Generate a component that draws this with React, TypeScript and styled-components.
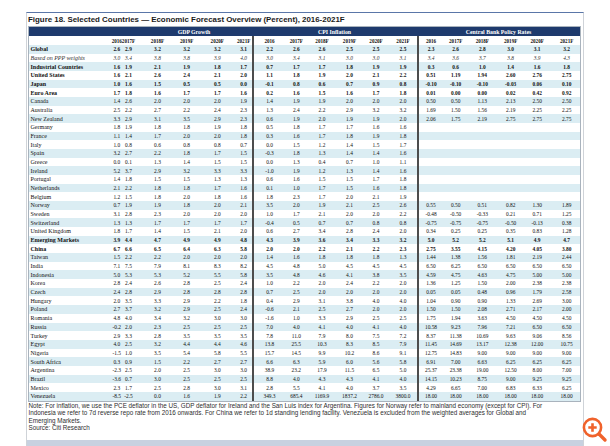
import React from "react";
import styled, { createGlobalStyle } from "styled-components";

type Kind = "bold" | "italic" | undefined;

interface Row {
  name: string;
  kind?: Kind;
  gdp: string;
  cpi: string;
  cbr?: string;
}

const rows: Row[] = [
  { name: "Global", kind: "bold", gdp: "2.6 2.9 3.2 3.2 3.2 3.1", cpi: "2.2 2.6 2.6 2.5 2.5 2.5", cbr: "2.3 2.6 2.8 3.0 3.1 3.2" },
  { name: "Based on PPP weights", kind: "italic", gdp: "3.0 3.4 3.8 3.8 3.9 4.0", cpi: "3.0 3.4 3.1 3.0 3.0 3.1", cbr: "3.4 3.6 3.7 3.8 3.9 4.3" },
  { name: "Industrial Countries", kind: "bold", gdp: "1.6 1.9 2.1 1.9 1.8 1.7", cpi: "0.7 1.7 1.7 1.8 1.9 1.9", cbr: "0.3 0.6 1.0 1.4 1.6 1.8" },
  { name: "United States", kind: "bold", gdp: "1.6 2.1 2.6 2.4 2.1 2.0", cpi: "1.1 1.8 1.9 2.0 2.1 2.2", cbr: "0.51 1.19 1.94 2.60 2.76 2.75" },
  { name: "Japan", kind: "bold", gdp: "1.0 1.6 1.5 0.5 0.5 0.0", cpi: "-0.1 0.8 0.6 0.7 0.9 0.8", cbr: "-0.10 -0.10 -0.10 -0.03 0.06 0.10" },
  { name: "Euro Area", kind: "bold", gdp: "1.7 1.8 1.6 1.7 1.7 1.6", cpi: "0.2 1.6 1.5 1.6 1.7 1.8", cbr: "0.01 0.00 0.00 0.02 0.42 0.92" },
  { name: "Canada", gdp: "1.4 2.6 2.0 2.0 2.0 1.9", cpi: "1.4 1.9 1.9 2.0 2.0 2.0", cbr: "0.50 0.50 1.13 2.13 2.50 2.50" },
  { name: "Australia", gdp: "2.5 2.2 2.7 2.2 2.4 2.3", cpi: "1.3 2.4 2.2 2.9 3.2 3.2", cbr: "1.69 1.50 1.56 2.19 2.25 2.25" },
  { name: "New Zealand", gdp: "3.3 2.9 3.1 3.5 2.9 2.3", cpi: "0.6 1.9 2.0 1.9 1.9 2.0", cbr: "2.06 1.75 2.19 2.75 2.75 2.75" },
  { name: "Germany", gdp: "1.8 1.9 1.8 1.8 1.9 1.8", cpi: "0.5 1.8 1.7 1.7 1.6 1.6" },
  { name: "France", gdp: "1.1 1.4 1.7 2.0 2.0 1.8", cpi: "0.3 1.6 1.7 1.8 1.9 1.8" },
  { name: "Italy", gdp: "1.0 0.8 0.6 0.8 0.8 0.7", cpi: "0.0 1.5 1.2 1.4 1.5 1.7" },
  { name: "Spain", gdp: "3.2 2.7 2.2 1.8 1.7 1.5", cpi: "-0.3 1.8 1.3 1.4 1.4 1.6" },
  { name: "Greece", gdp: "0.0 0.1 1.3 1.4 1.5 1.5", cpi: "0.0 1.3 0.4 0.7 1.0 1.1" },
  { name: "Ireland", gdp: "5.2 3.7 2.9 3.2 3.3 3.3", cpi: "-1.0 1.9 1.2 1.3 1.4 1.6" },
  { name: "Portugal", gdp: "1.4 1.8 1.5 1.5 1.3 1.3", cpi: "0.6 1.6 1.5 1.5 1.7 1.8" },
  { name: "Netherlands", gdp: "2.1 2.2 1.8 1.8 1.7 1.6", cpi: "0.1 1.0 1.7 1.5 1.6 1.8" },
  { name: "Belgium", gdp: "1.2 1.5 1.8 2.0 1.8 1.6", cpi: "1.8 2.3 1.7 2.0 2.1 1.9" },
  { name: "Norway", gdp: "0.7 1.9 1.9 1.8 2.0 2.1", cpi: "3.5 2.0 1.9 2.1 2.5 2.6", cbr: "0.55 0.50 0.51 0.82 1.30 1.89" },
  { name: "Sweden", gdp: "3.1 2.8 2.3 2.0 2.0 2.0", cpi: "1.0 1.7 2.1 2.0 2.0 2.2", cbr: "-0.48 -0.50 -0.33 0.21 0.71 1.25" },
  { name: "Switzerland", gdp: "1.3 1.3 1.7 1.7 1.7 1.7", cpi: "-0.4 0.5 0.7 0.7 0.8 0.8", cbr: "-0.75 -0.75 -0.75 -0.50 -0.13 0.38" },
  { name: "United Kingdom", gdp: "1.8 1.7 1.4 1.5 2.1 2.0", cpi: "0.6 2.7 3.4 2.8 2.4 2.0", cbr: "0.34 0.25 0.25 0.35 0.83 1.28" },
  { name: "Emerging Markets", kind: "bold", gdp: "3.9 4.4 4.7 4.9 4.9 4.8", cpi: "4.3 3.9 3.6 3.4 3.3 3.2", cbr: "5.0 5.2 5.2 5.1 4.9 4.7" },
  { name: "China", kind: "bold", gdp: "6.7 6.6 6.5 6.4 6.3 5.8", cpi: "2.0 2.0 2.2 2.1 2.2 2.3", cbr: "2.75 3.55 4.15 4.20 4.05 3.80" },
  { name: "Taiwan", gdp: "1.5 2.2 2.2 2.0 2.0 2.0", cpi: "1.4 1.6 1.8 1.8 1.8 1.3", cbr: "1.44 1.38 1.56 1.81 2.19 2.44" },
  { name: "India", gdp: "7.1 7.5 7.9 8.1 8.3 8.2", cpi: "4.5 4.8 5.0 4.5 4.5 4.5", cbr: "6.50 6.25 6.50 6.50 6.50 6.50" },
  { name: "Indonesia", gdp: "5.0 5.3 5.3 5.2 5.5 5.8", cpi: "3.5 4.8 4.6 4.1 3.8 3.5", cbr: "4.59 4.75 4.63 4.75 5.00 5.00" },
  { name: "Korea", gdp: "2.8 2.4 2.6 2.8 2.5 2.4", cpi: "1.0 2.2 2.0 2.4 2.2 2.0", cbr: "1.36 1.25 1.50 2.00 2.38 2.38" },
  { name: "Czech", gdp: "2.4 2.8 2.9 2.8 2.8 2.8", cpi: "0.7 2.5 2.0 2.0 2.0 2.0", cbr: "0.05 0.05 0.48 0.96 1.79 2.58" },
  { name: "Hungary", gdp: "2.0 3.5 3.3 2.9 2.2 1.8", cpi: "0.4 2.9 3.1 3.8 4.0 4.0", cbr: "1.04 0.90 0.90 1.33 2.69 3.00" },
  { name: "Poland", gdp: "2.7 3.7 3.2 2.9 2.5 2.4", cpi: "-0.6 2.1 2.5 2.7 2.0 2.0", cbr: "1.50 1.50 2.08 2.71 2.17 2.00" },
  { name: "Romania", gdp: "4.8 4.0 3.4 3.2 3.0 3.0", cpi: "-1.6 1.0 3.3 2.9 2.5 2.5", cbr: "1.75 1.94 3.63 4.50 4.50 4.50" },
  { name: "Russia", gdp: "-0.2 2.0 2.3 2.5 2.5 2.5", cpi: "7.0 4.0 4.1 4.0 4.1 4.0", cbr: "10.58 9.23 7.96 7.21 6.50 6.50" },
  { name: "Turkey", gdp: "2.9 3.3 2.8 3.5 3.5 3.5", cpi: "7.8 11.0 7.9 8.0 7.5 7.2", cbr: "8.37 11.38 10.69 9.63 9.06 8.56" },
  { name: "Egypt", gdp: "4.0 2.5 3.2 4.4 4.4 4.6", cpi: "13.8 25.5 10.3 8.3 8.5 7.9", cbr: "11.45 14.69 13.17 12.38 12.00 10.75" },
  { name: "Nigeria", gdp: "-1.5 1.0 3.5 5.4 5.8 5.5", cpi: "15.7 14.5 9.9 10.2 8.6 9.1", cbr: "12.75 14.83 9.00 9.00 9.00 9.00" },
  { name: "South Africa", gdp: "0.3 0.9 1.5 2.2 2.7 2.7", cpi: "6.6 6.3 5.9 6.0 5.6 5.8", cbr: "6.91 7.00 6.63 6.25 6.25 6.25" },
  { name: "Argentina", gdp: "-2.3 2.5 2.0 2.5 3.0 3.0", cpi: "38.9 23.2 17.9 11.5 6.5 5.0", cbr: "25.37 23.38 19.00 12.50 8.00 7.00" },
  { name: "Brazil", gdp: "-3.6 0.7 3.0 2.5 2.5 2.5", cpi: "8.8 4.0 4.3 4.3 4.1 4.0", cbr: "14.15 10.23 8.75 9.00 9.25 9.25" },
  { name: "Mexico", gdp: "2.3 1.7 2.5 2.8 3.0 3.1", cpi: "2.8 5.5 4.1 4.0 3.7 3.5", cbr: "4.29 6.65 7.00 6.83 6.33 6.25" },
  { name: "Venezuela", gdp: "-8.5 -2.5 0.0 1.6 1.9 2.2", cpi: "349.3 685.4 1169.9 1837.2 2786.0 3800.0", cbr: "18.00 18.00 18.00 18.00 18.00 18.00" },
];

const years = ["2016", "2017F", "2018F", "2019F", "2020F", "2021F"];

// column centres inside each block, measured from the figure
const tracks = (centers: number[], width: number) => {
  const parts: string[] = [];
  let pos = 0;
  centers.forEach((c) => {
    parts.push(`${(c - 5 - pos).toFixed(1)}px`, "10px");
    pos = c + 5;
  });
  parts.push(`${(width - pos).toFixed(1)}px`);
  return parts.join(" ");
};

const GDP_TRACKS = tracks([8.8, 20.5, 49.5, 78.7, 109.3, 135.7], 144);
const CPI_TRACKS = tracks([15.5, 42.3, 68, 95.5, 122, 149], 163);
const CBR_TRACKS = tracks([12, 36.7, 63.3, 91.7, 118.2, 147.7], 161);

const GlobalStyle = createGlobalStyle`
  html, body {
    margin: 0;
    padding: 0;
    background: #ffffff;
  }
`;

const Page = styled.div`
  position: relative;
  width: 610px;
  height: 446px;
  overflow: hidden;
  padding: 12px 0 0 26px;
  box-sizing: border-box;
  font-family: "Liberation Serif", "Times New Roman", serif;
`;

const Figure = styled.div`
  width: 558px;
  box-sizing: border-box;
  border-top: 1px solid #5a76a8;
  border-left: 1px solid #cfd3d8;
  border-right: 1px solid #cfd3d8;
  padding: 0 2px 0 1px;
  display: flex;
  flex-direction: column;
`;

const Title = styled.div`
  height: 13px;
  display: flex;
  align-items: center;
  font-family: "Liberation Sans", Arial, sans-serif;
  font-weight: bold;
  font-size: 7.9px;
  color: #1a1a1a;
  white-space: nowrap;
`;

const Table = styled.div`
  border: 1px solid #a9b3bd;
  display: flex;
  flex-direction: column;
`;

const Line = styled.div`
  display: grid;
  grid-template-columns: 79px 144px 165px 163px;
`;

const NavyBar = styled(Line)`
  height: 9px;
  background: #1e3a6d;
  color: #ffffff;
  font-weight: bold;
  font-size: 5.8px;
`;

const GroupTitle = styled.div<{ $shift?: number }>`
  display: flex;
  align-items: center;
  justify-content: center;
  padding-left: ${(p) => p.$shift ?? 0}px;
  white-space: nowrap;
`;

const DataRow = styled(Line)<{ $shade?: boolean; $kind?: Kind }>`
  height: 8.685px;
  background: ${(p) => (p.$shade ? "#dbedf3" : "#ffffff")};
  color: ${(p) => (p.$kind === "italic" ? "#333333" : "#111111")};
  font-weight: ${(p) => (p.$kind === "bold" ? "bold" : "normal")};
  font-style: ${(p) => (p.$kind === "italic" ? "italic" : "normal")};
`;

const Label = styled.div`
  display: flex;
  align-items: center;
  padding-left: 1.5px;
  font-size: 6px;
  white-space: nowrap;
`;

const Group = styled.div<{ $tracks: string; $divider?: boolean }>`
  display: grid;
  grid-template-columns: ${(p) => p.$tracks};
  box-sizing: border-box;
  border-left: ${(p) => (p.$divider ? "2px solid #4d4d4d" : "none")};
  ${[1, 2, 3, 4, 5, 6].map((n) => `& > :nth-child(${n}) { grid-column: ${n * 2}; }`).join("\n")}
`;

const Cell = styled.div`
  display: flex;
  align-items: center;
  justify-content: center;
  white-space: nowrap;
  font-size: 5.4px;
`;

const YearRow = styled(Line)`
  height: 9px;
  background: #ffffff;
  color: #111111;
  font-weight: bold;

  ${Cell} {
    font-size: 5.1px;
  }
`;

const Notes = styled.div`
  font-family: "Liberation Sans", Arial, sans-serif;
  font-size: 6.3px;
  line-height: 7.6px;
  color: #2e2e2e;
  padding-left: 0.5px;
  white-space: nowrap;
`;

const BottomBand = styled.div`
  height: 6px;
  margin-top: 8.5px;
  margin-left: -1px;
  margin-right: -2px;
  background: #c8d1e0;
`;

const ZoomBadge = styled.div`
  position: absolute;
  left: 580px;
  top: 415px;
  width: 28px;
  height: 28px;
`;

const Values: React.FC<{ list?: string; tracks: string; divider?: boolean }> = ({ list, tracks: t, divider }) => (
  <Group $tracks={t} $divider={divider}>
    {(list ? list.split(" ") : []).map((v, i) => (
      <Cell key={i}>{v}</Cell>
    ))}
  </Group>
);

const App: React.FC = () => {
  const yearList = years.join(" ");
  return (
    <Page>
      <GlobalStyle />
      <Figure>
        <Title>Figure 18. Selected Countries — Economic Forecast Overview (Percent), 2016-2021F</Title>
        <Table>
          <NavyBar>
            <div />
            <GroupTitle $shift={28}>GDP Growth</GroupTitle>
            <GroupTitle>CPI Inflation</GroupTitle>
            <GroupTitle>Central Bank Policy Rates</GroupTitle>
          </NavyBar>
          <YearRow>
            <div />
            <Values list={yearList} tracks={GDP_TRACKS} />
            <Values list={yearList} tracks={CPI_TRACKS} divider />
            <Values list={yearList} tracks={CBR_TRACKS} divider />
          </YearRow>
          {rows.map((r, i) => (
            <DataRow key={r.name} $shade={i % 2 === 0} $kind={r.kind}>
              <Label>{r.name}</Label>
              <Values list={r.gdp} tracks={GDP_TRACKS} />
              <Values list={r.cpi} tracks={CPI_TRACKS} divider />
              <Values list={r.cbr} tracks={CBR_TRACKS} divider />
            </DataRow>
          ))}
        </Table>
        <Notes>
          Note: For inflation, we use the PCE deflator in the US, GDP deflator for Ireland and the San Luis index for Argentina. Figures for Norway refer to mainland economy (except for CPI). For
          <br />
          Indonesia we refer to 7d reverse repo rate from 2016 onwards. For China we refer to 1d standing lending facility. Venezuela is excluded from the weighted averages for Global and
          <br />
          Emerging Markets.
          <br />
          Source: Citi Research
        </Notes>
        <BottomBand />
      </Figure>
      <ZoomBadge>
        <svg width="28" height="28" viewBox="0 0 28 28" fill="none">
          <circle cx="12.5" cy="12.5" r="8.6" fill="#ffffff" stroke="#f0622b" strokeWidth="2.6" />
          <path d="M12.5 8.3v8.4M8.3 12.5h8.4" stroke="#f0622b" strokeWidth="2.6" />
          <path d="M19 19l6 6" stroke="#f0622b" strokeWidth="3.4" strokeLinecap="round" />
        </svg>
      </ZoomBadge>
    </Page>
  );
};

export default App;
